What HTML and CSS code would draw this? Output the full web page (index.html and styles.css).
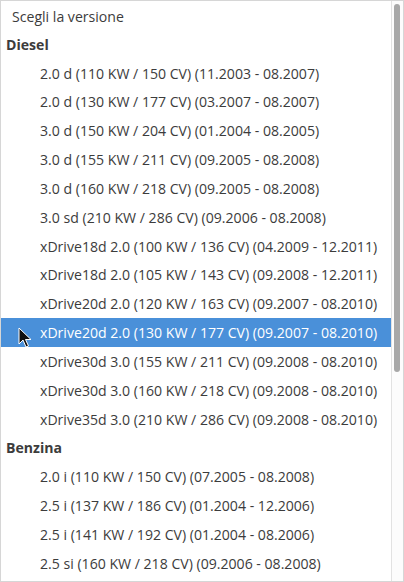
FILE: index.html
```html
<!DOCTYPE html>
<html lang="it">
<head>
  <meta charset="UTF-8" />
  <title>Scegli la versione</title>
  <link rel="stylesheet" href="styles.css">
</head>
<body>

<div class="tendina">
  <ul class="opzioni">
    <li class="opzione vuota">Scegli la versione</li>
    <li class="gruppo">Diesel</li>
    <li class="opzione">2.0 d (110 KW / 150 CV) (11.2003 - 08.2007)</li>
    <li class="opzione">2.0 d (130 KW / 177 CV) (03.2007 - 08.2007)</li>
    <li class="opzione">3.0 d (150 KW / 204 CV) (01.2004 - 08.2005)</li>
    <li class="opzione">3.0 d (155 KW / 211 CV) (09.2005 - 08.2008)</li>
    <li class="opzione">3.0 d (160 KW / 218 CV) (09.2005 - 08.2008)</li>
    <li class="opzione">3.0 sd (210 KW / 286 CV) (09.2006 - 08.2008)</li>
    <li class="opzione">xDrive18d 2.0 (100 KW / 136 CV) (04.2009 - 12.2011)</li>
    <li class="opzione">xDrive18d 2.0 (105 KW / 143 CV) (09.2008 - 12.2011)</li>
    <li class="opzione">xDrive20d 2.0 (120 KW / 163 CV) (09.2007 - 08.2010)</li>
    <li class="opzione attiva">xDrive20d 2.0 (130 KW / 177 CV) (09.2007 - 08.2010)
      <svg class="cursore" width="14" height="22" viewBox="0 0 14 22">
        <path d="M1 1 L1 17 L5 13 L8 20 L10.5 19 L7.5 12.5 L13 12.5 Z" fill="#111" stroke="#fff" stroke-width="1" stroke-linejoin="round"/>
      </svg>
    </li>
    <li class="opzione">xDrive30d 3.0 (155 KW / 211 CV) (09.2008 - 08.2010)</li>
    <li class="opzione">xDrive30d 3.0 (160 KW / 218 CV) (09.2008 - 08.2010)</li>
    <li class="opzione">xDrive35d 3.0 (210 KW / 286 CV) (09.2008 - 08.2010)</li>
    <li class="gruppo">Benzina</li>
    <li class="opzione">2.0 i (110 KW / 150 CV) (07.2005 - 08.2008)</li>
    <li class="opzione">2.5 i (137 KW / 186 CV) (01.2004 - 12.2006)</li>
    <li class="opzione">2.5 i (141 KW / 192 CV) (01.2004 - 08.2006)</li>
    <li class="opzione">2.5 si (160 KW / 218 CV) (09.2006 - 08.2008)</li>
  </ul>
  <div class="barra">
    <div class="cursore-barra"></div>
  </div>
</div>

</body>
</html>
```

FILE: styles.css
```css
html, body { margin: 0; background: #fff; }
body { font-family: "Open Sans", "DejaVu Sans", sans-serif; font-size: 14.1px; color: #3c3c3c; }
.tendina { display: flex; height: 582px; box-sizing: border-box; border: 1px solid #d6d6d6; overflow: hidden; }
.opzioni { flex: 1; list-style: none; margin: 0; padding: 0; overflow: hidden; }
.opzioni li { height: 28.83px; display: flex; align-items: center; white-space: nowrap; position: relative; }
.vuota { padding-left: 11px; padding-top: 3px; box-sizing: border-box; }
.gruppo { font-weight: bold; padding-left: 5px; }
.opzione { padding-left: 39px; }
.vuota.opzione { padding-left: 11px; }
.attiva { background: #4a90d9; color: #fff; }
.cursore { position: absolute; left: 17px; top: 9px; }
.barra { width: 11px; border-left: 1px solid #e2e2e2; background: #fcfcfc; position: relative; }
.cursore-barra { position: absolute; left: 2px; top: 3px; width: 6px; height: 368px; background: #a8a8a8; border-radius: 3px; }
```
